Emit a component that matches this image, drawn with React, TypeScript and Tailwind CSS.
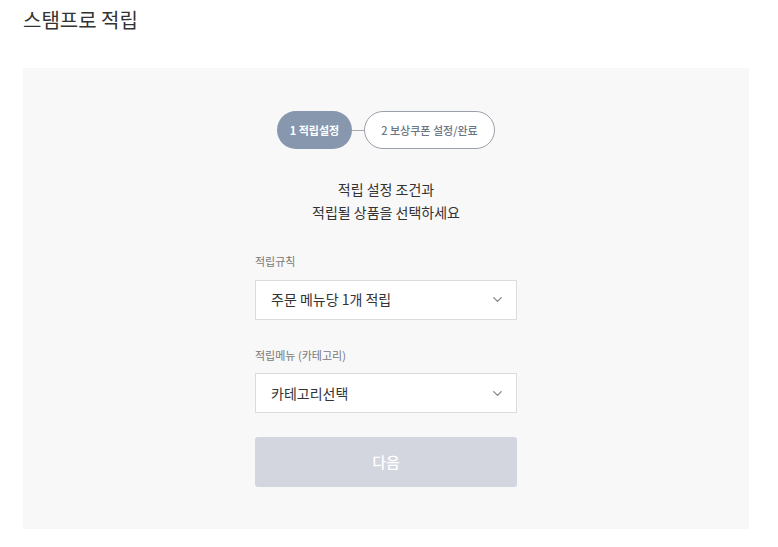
import { ChevronDown } from "lucide-react";

const font = { fontFamily: '"Noto Sans CJK KR", "Noto Sans", sans-serif' };

function SelectBox({ value }: { value: string }) {
  return (
    <div className="flex h-[40px] w-[262px] items-center justify-between border border-[#dcdcdc] bg-white pl-[15px] pr-[11px]">
      <span className="text-[14px] text-[#333]">{value}</span>
      <ChevronDown size={15} strokeWidth={2.2} className="text-[#888]" />
    </div>
  );
}

export default function App() {
  return (
    <div className="h-[547px] w-[778px] bg-white" style={font}>
      <div className="pl-[23px] pt-[6px]">
        <h1 className="text-[20px] font-normal leading-[28px] text-[#333]">스탬프로 적립</h1>
      </div>

      <div className="ml-[23px] mt-[34px] flex h-[461px] w-[726px] flex-col items-center bg-[#f8f8f8] pt-[43px]">
        {/* steps */}
        <div className="flex items-center">
          <div className="flex h-[38px] w-[75px] items-center justify-center rounded-full bg-[#8797ae] text-[11px] font-bold text-white">
            1 적립설정
          </div>
          <div className="h-px w-[12px] bg-[#aaa]" />
          <div className="flex h-[38px] w-[131px] items-center justify-center rounded-full border border-[#9aa0aa] bg-white text-[11px] font-medium text-[#6b7585]">
            2 보상쿠폰 설정/완료
          </div>
        </div>

        <p className="mt-[29px] text-center text-[14px] leading-[23px] text-[#333]">
          적립 설정 조건과
          <br />
          적립될 상품을 선택하세요
        </p>

        <div className="mt-[29px] flex w-[262px] flex-col">
          <label className="text-[11px] text-[#777]">적립규칙</label>
          <div className="mt-[10px]">
            <SelectBox value="주문 메뉴당 1개 적립" />
          </div>

          <label className="mt-[27px] text-[11px] text-[#777]">적립메뉴 (카테고리)</label>
          <div className="mt-[10px]">
            <SelectBox value="카테고리선택" />
          </div>

          <button className="mt-[24px] h-[50px] w-[262px] rounded-[3px] bg-[#d3d6de] text-[15px] font-medium text-white">
            다음
          </button>
        </div>
      </div>
    </div>
  );
}
